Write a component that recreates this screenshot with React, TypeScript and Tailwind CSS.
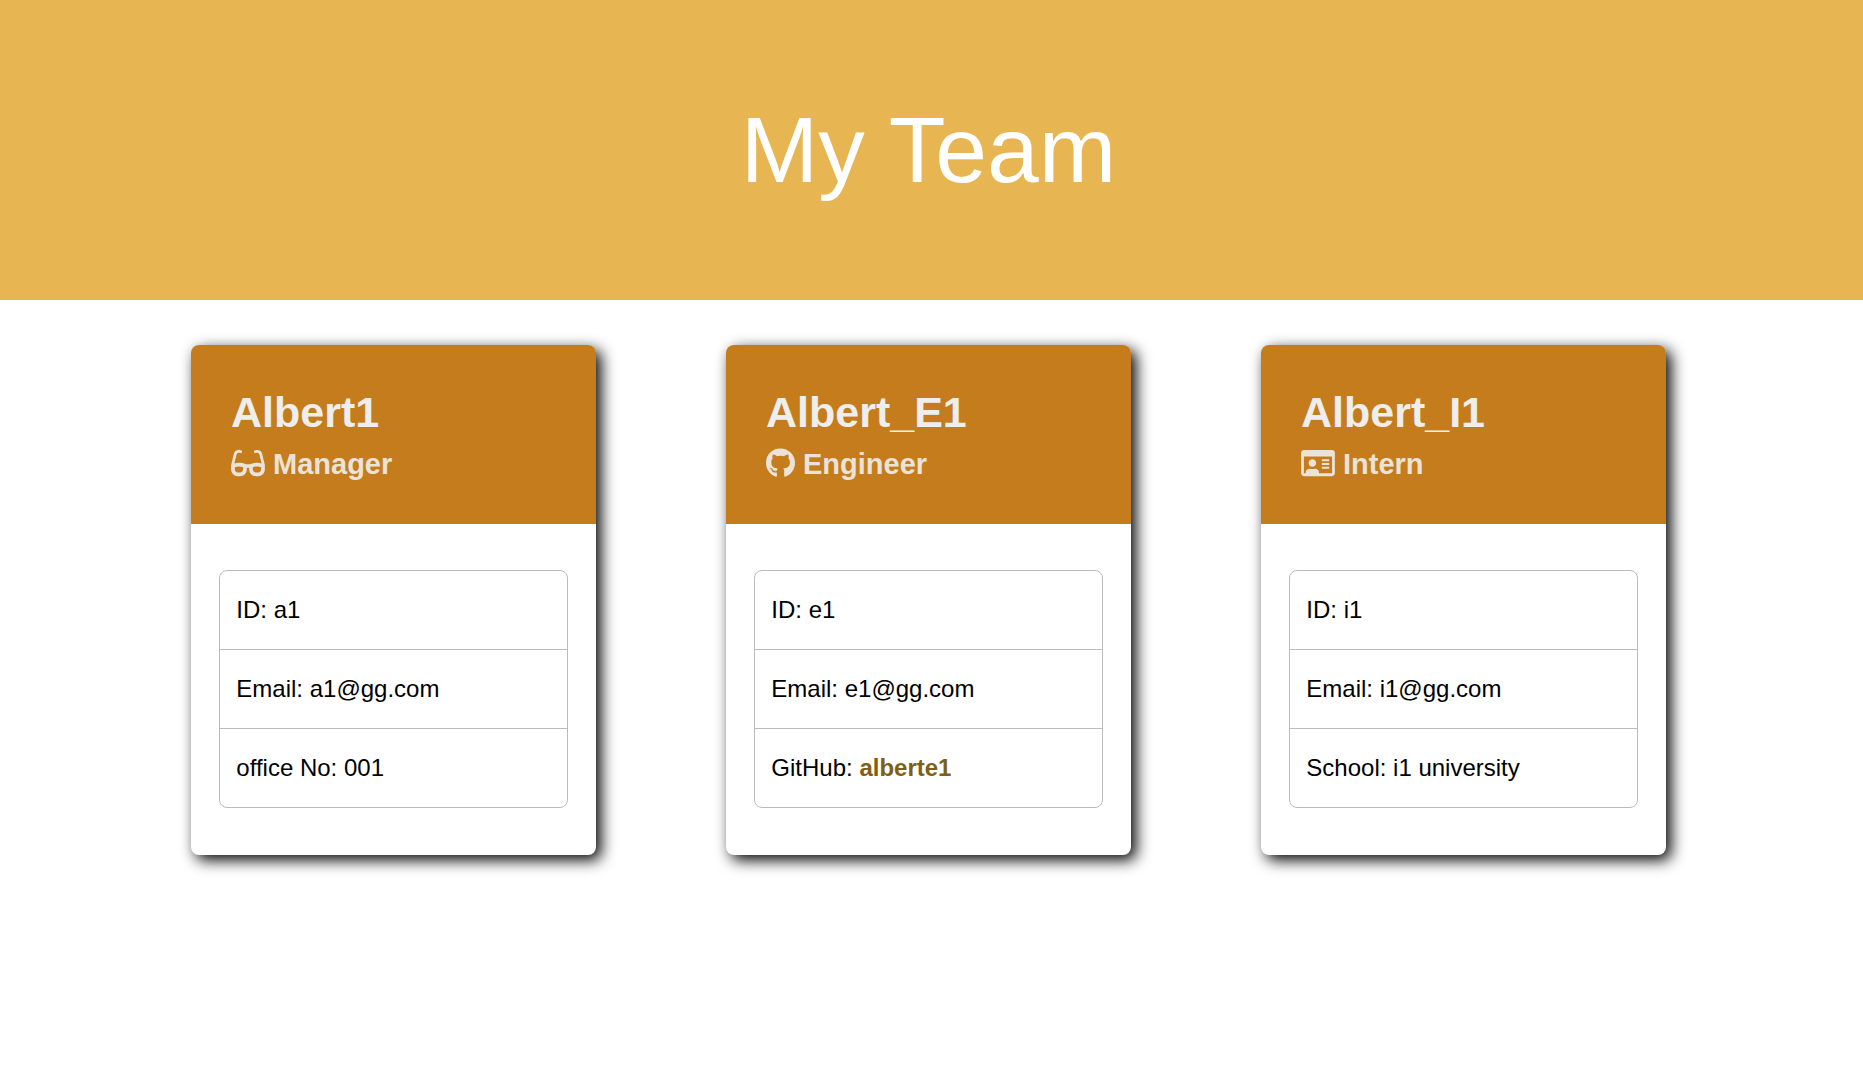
import type { ReactNode } from "react";
import { FaGithub, FaGlasses, FaRegIdCard } from "react-icons/fa";

type Member = {
  name: string;
  role: string;
  icon: ReactNode;
  rows: ReactNode[];
};

const members: Member[] = [
  {
    name: "Albert1",
    role: "Manager",
    icon: <FaGlasses className="mb-0.5 h-[30px] w-[34px]" aria-hidden />,
    rows: ["ID: a1", "Email: a1@gg.com", "office No: 001"],
  },
  {
    name: "Albert_E1",
    role: "Engineer",
    icon: <FaGithub className="mb-0.5 h-[30px] w-[29px]" aria-hidden />,
    rows: [
      "ID: e1",
      "Email: e1@gg.com",
      <>
        GitHub:{" "}
        <a href="https://github.com/alberte1" className="font-bold text-[#7f5f16]">
          alberte1
        </a>
      </>,
    ],
  },
  {
    name: "Albert_I1",
    role: "Intern",
    icon: <FaRegIdCard className="mb-0.5 h-[30px] w-[34px]" aria-hidden />,
    rows: ["ID: i1", "Email: i1@gg.com", "School: i1 university"],
  },
];

function MemberCard({ member }: { member: Member }) {
  return (
    <article className="overflow-hidden rounded-lg bg-white shadow-[5px_5px_15px_#000000]">
      <header className="bg-[#c57c1c] px-10 pt-[41px] pb-[42px] font-bold text-[#eeeeee]">
        <h2 className="text-[43px] leading-[52px]">{member.name}</h2>
        <h3 className="mt-2 flex items-center gap-2 text-[29px] leading-[36px] text-[#ebe3d9]">
          {member.icon}
          {member.role}
        </h3>
      </header>
      <ul className="mx-[7%] mt-[46px] mb-[47px] divide-y divide-[#bbbbbb] rounded-lg border border-[#bbbbbb] text-2xl text-black">
        {member.rows.map((row, i) => (
          <li key={i} className="px-4 py-[23px]">
            {row}
          </li>
        ))}
      </ul>
    </article>
  );
}

export default function App() {
  return (
    <div className="min-h-screen bg-white font-['Liberation_Sans',Arial,sans-serif]">
      <header className="bg-[#e7b551] py-24 pr-1.5 text-center text-white">
        <h1 className="text-[93px] leading-[108px]">My Team</h1>
      </header>
      <main className="pt-[45px] pr-1.5 pb-16">
        <div className="mx-auto grid max-w-[1475px] grid-cols-3 gap-[130px]">
          {members.map((member) => (
            <MemberCard key={member.name} member={member} />
          ))}
        </div>
      </main>
    </div>
  );
}
